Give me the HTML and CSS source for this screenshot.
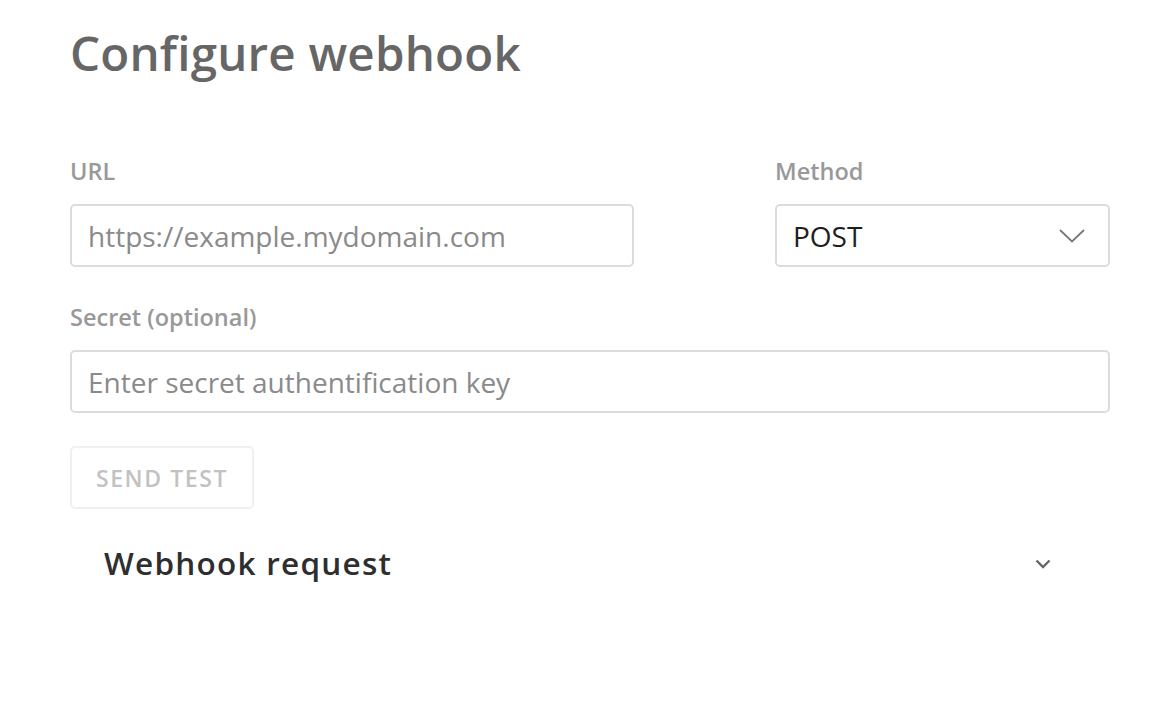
FILE: index.html
```html
<!DOCTYPE html>
<html>
<head>
<meta charset="utf-8">
<link rel="stylesheet" href="styles.css">
</head>
<body>
<div class="page">
  <h1 class="title">Configure webhook</h1>
  <div class="row">
    <div class="field">
      <label class="label">URL</label>
      <div class="input placeholder">https://example.mydomain.com</div>
    </div>
    <div class="field">
      <label class="label">Method</label>
      <div class="input select">
        <span class="value">POST</span>
        <svg class="chev" width="26" height="14" viewBox="0 0 26 14"><path d="M1 1 L13 12.5 L25 1" fill="none" stroke="#777" stroke-width="1.8"/></svg>
      </div>
    </div>
  </div>
  <div class="field secret">
    <label class="label">Secret (optional)</label>
    <div class="input placeholder">Enter secret authentification key</div>
  </div>
  <button class="btn">SEND TEST</button>
  <div class="accordion">
    <span class="acc-title">Webhook request</span>
    <svg class="acc-chev" width="16" height="10" viewBox="0 0 16 10"><path d="M1.5 1.5 L8 8 L14.5 1.5" fill="none" stroke="#666" stroke-width="2.4"/></svg>
  </div>
</div>
</body>
</html>
```

FILE: styles.css
```css
* { box-sizing: border-box; }
html, body { margin: 0; padding: 0; background: #fff; }
body { font-family: "Open Sans", "Noto Sans", sans-serif; }
.page { width: 1040px; margin-left: 70px; padding-top: 23px; }
.title {
  margin: 0;
  font-size: 47.5px;
  font-weight: 600;
  color: #666;
  line-height: 60px;
  letter-spacing: 0.2px;
}
.row {
  display: grid;
  grid-template-columns: 564px 335px;
  justify-content: space-between;
  margin-top: 73px;
}
.field { display: flex; flex-direction: column; }
.label {
  font-size: 23.5px;
  font-weight: 600;
  color: #999;
  line-height: 30px;
  margin-bottom: 18px;
}
.input {
  height: 63px;
  border: 2px solid #dcdcdc;
  border-radius: 5px;
  padding: 0 16px;
  display: flex;
  align-items: center;
  font-size: 28px;
}
.placeholder { color: #8a8a8a; }
.select { justify-content: space-between; color: #222; padding-right: 23px; }
.select .value { color: #1e1e1e; }
.secret { margin-top: 35px; }
.btn {
  margin-top: 33px;
  width: 184px;
  height: 63px;
  background: #fff;
  border: 2px solid #f0f0f0;
  border-radius: 5px;
  font-family: "Open Sans", "Noto Sans", sans-serif;
  font-size: 23px;
  font-weight: 600;
  letter-spacing: 1.6px;
  color: #c2c2c2;
  padding: 0;
}
.accordion {
  display: flex;
  align-items: center;
  justify-content: space-between;
  margin-top: 17px;
  padding: 0 59px 0 34px;
  height: 72px;
}
.acc-title {
  font-size: 31.5px;
  font-weight: 600;
  color: #2e2e2e;
  letter-spacing: 1.25px;
}
.acc-chev { margin-top: 4px; }
```
